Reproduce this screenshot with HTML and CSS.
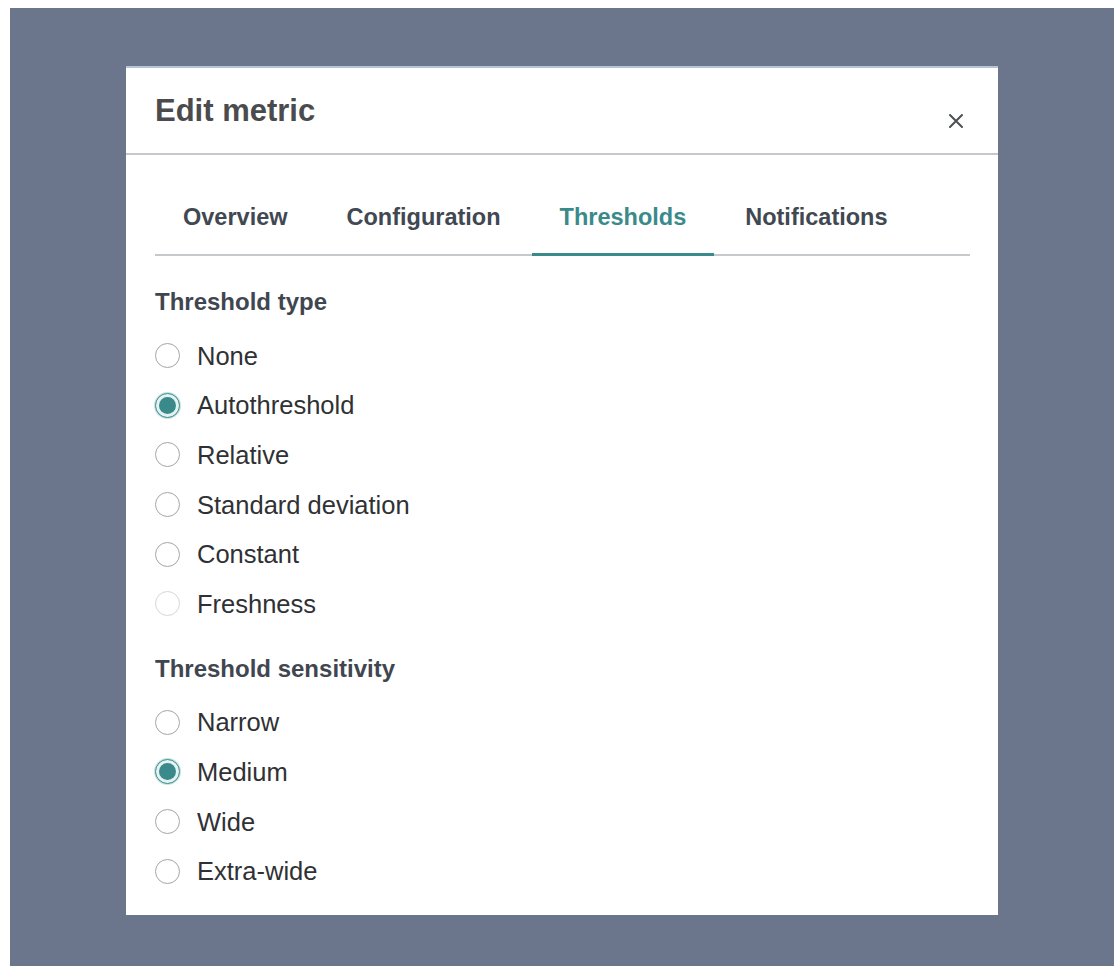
FILE: index.html
```html
<!DOCTYPE html>
<html lang="en">
<head>
<meta charset="utf-8">
<title>Edit metric</title>
<link rel="stylesheet" href="styles.css">
</head>
<body>
<div class="backdrop">
  <div class="modal" role="dialog" aria-labelledby="modal-title">
    <header class="modal-header">
      <h1 id="modal-title" class="modal-title">Edit metric</h1>
      <button class="close-btn" aria-label="Close">
        <svg width="16" height="16" viewBox="0 0 16 16" aria-hidden="true">
          <path d="M2 2 L14 14 M14 2 L2 14" stroke="#4d4f52" stroke-width="2" stroke-linecap="round" fill="none"/>
        </svg>
      </button>
    </header>

    <div class="modal-body">
      <nav class="tabs">
        <span class="tab">Overview</span>
        <span class="tab">Configuration</span>
        <span class="tab tab-active">Thresholds</span>
        <span class="tab">Notifications</span>
      </nav>

      <section class="group group-type">
        <h2 class="group-title">Threshold type</h2>
        <ul class="radio-list">
          <li class="radio-row"><span class="radio"></span><span class="radio-label">None</span></li>
          <li class="radio-row"><span class="radio radio-checked"></span><span class="radio-label">Autothreshold</span></li>
          <li class="radio-row"><span class="radio"></span><span class="radio-label">Relative</span></li>
          <li class="radio-row"><span class="radio"></span><span class="radio-label">Standard deviation</span></li>
          <li class="radio-row"><span class="radio"></span><span class="radio-label">Constant</span></li>
          <li class="radio-row"><span class="radio radio-faint"></span><span class="radio-label">Freshness</span></li>
        </ul>
      </section>

      <section class="group group-sensitivity">
        <h2 class="group-title">Threshold sensitivity</h2>
        <ul class="radio-list">
          <li class="radio-row"><span class="radio"></span><span class="radio-label">Narrow</span></li>
          <li class="radio-row"><span class="radio radio-checked"></span><span class="radio-label">Medium</span></li>
          <li class="radio-row"><span class="radio"></span><span class="radio-label">Wide</span></li>
          <li class="radio-row"><span class="radio"></span><span class="radio-label">Extra-wide</span></li>
        </ul>
      </section>
    </div>
  </div>
</div>
</body>
</html>
```

FILE: styles.css
```css
* {
  box-sizing: border-box;
}

html, body {
  margin: 0;
  background: #ffffff;
}

body {
  padding: 8px 0 0 10px;
  font-family: "Liberation Sans", Arial, Helvetica, sans-serif;
}

.backdrop {
  background: #6b758c;
  height: 958px;
  padding: 58px 0 0 116px;
}

.modal {
  width: 872px;
  height: 849px;
  background: #ffffff;
  border-top: 2px solid #b7c4d5;
  display: flex;
  flex-direction: column;
}

/* header with title and close button */
.modal-header {
  height: 87px;
  padding: 0 34px 0 29px;
  display: flex;
  align-items: center;
  justify-content: space-between;
  border-bottom: 2px solid #c4c8cc;
}

.modal-title {
  margin: 0;
  font-size: 31px;
  line-height: 36px;
  font-weight: 700;
  color: #4a4b4d;
}

.close-btn {
  margin-top: 20px;
  width: 16px;
  height: 16px;
  padding: 0;
  border: 0;
  background: transparent;
  display: flex;
}

.modal-body {
  padding: 0 28px 0 29px;
}

/* tab strip */
.tabs {
  display: flex;
  gap: 3px;
  border-bottom: 2px solid #c6c9cc;
}

.tab {
  padding: 48px 28px 22px;
  font-size: 23.5px;
  line-height: 28px;
  font-weight: 700;
  color: #414852;
  border-bottom: 3px solid transparent;
  margin-bottom: -2px;
}

.tab-active {
  color: #3a8a8b;
  border-bottom-color: #3a8a8b;
}

/* radio groups */
.group-type {
  margin-top: 32px;
}

.group-sensitivity {
  margin-top: 26px;
}

.group-title {
  margin: 0;
  font-size: 24px;
  line-height: 28px;
  font-weight: 700;
  color: #3f4650;
}

.radio-list {
  list-style: none;
  margin: 15px 0 0;
  padding: 0;
}

.radio-row {
  height: 49.6px;
  display: flex;
  align-items: center;
  gap: 17px;
}

.radio {
  width: 25px;
  height: 25px;
  border-radius: 50%;
  border: 1.5px solid #a3a5a8;
  background: #ffffff;
  display: flex;
  align-items: center;
  justify-content: center;
  flex: none;
}

.radio-faint {
  border-color: #d4d6d8;
}

.radio-checked {
  border-color: #3a8a8b;
  background: #e4f2f1;
  box-shadow: 0 0 0 1px #c7e4e2;
}

.radio-checked::after {
  content: "";
  width: 17px;
  height: 17px;
  border-radius: 50%;
  background: #3a8a8b;
}

.radio-label {
  font-size: 25.5px;
  line-height: 28px;
  color: #2f3134;
}
```
